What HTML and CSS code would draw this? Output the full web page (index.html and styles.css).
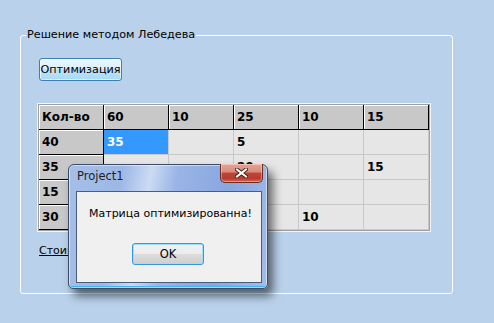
FILE: index.html
```html
<!DOCTYPE html>
<html lang="ru">
<head>
  <meta charset="UTF-8">
  <meta name="viewport" content="width=device-width, initial-scale=1.0">
  <title>Project1</title>
  <link rel="stylesheet" href="styles.css">
</head>
<body>
  <fieldset class="group">
    <legend>Решение методом Лебедева</legend>
    <div class="group-inner">
      <button class="btn-optimize">Оптимизация</button>

      <div class="grid">
        <div class="cell fixed">Кол-во</div>
        <div class="cell fixed">60</div>
        <div class="cell fixed">10</div>
        <div class="cell fixed">25</div>
        <div class="cell fixed">10</div>
        <div class="cell fixed">15</div>

        <div class="cell fixed">40</div>
        <div class="cell selected">35</div>
        <div class="cell"></div>
        <div class="cell">5</div>
        <div class="cell"></div>
        <div class="cell"></div>

        <div class="cell fixed">35</div>
        <div class="cell"></div>
        <div class="cell"></div>
        <div class="cell">20</div>
        <div class="cell"></div>
        <div class="cell">15</div>

        <div class="cell fixed">15</div>
        <div class="cell"></div>
        <div class="cell"></div>
        <div class="cell"></div>
        <div class="cell"></div>
        <div class="cell"></div>

        <div class="cell fixed">30</div>
        <div class="cell"></div>
        <div class="cell"></div>
        <div class="cell"></div>
        <div class="cell">10</div>
        <div class="cell"></div>
      </div>

      <div class="cost">Стоимость: 485</div>
    </div>
  </fieldset>

  <!-- message box over the form -->
  <div class="dialog">
    <div class="dialog-title">Project1</div>
    <button class="dialog-close">
      <svg width="13" height="10" viewBox="0 0 13 10">
        <path d="M2 1.5 L11 8.5 M11 1.5 L2 8.5" stroke="#4a1f18" stroke-width="4" stroke-linecap="square"/>
        <path d="M2 1.5 L11 8.5 M11 1.5 L2 8.5" stroke="#fff" stroke-width="2" stroke-linecap="square"/>
      </svg>
    </button>
    <div class="dialog-body">
      <p>Матрица оптимизированна!</p>
      <button class="btn-ok">OK</button>
    </div>
  </div>
</body>
</html>
```

FILE: styles.css
```css
* {
  box-sizing: border-box;
}

body {
  margin: 0;
  padding: 28px 0 0 20px;
  height: 323px;
  overflow: hidden;
  background: #b9d1ea;
  font-family: "DejaVu Sans", Tahoma, sans-serif;
  font-size: 11px;
  color: #000;
}

.group {
  width: 433px;
  height: 266px;
  margin: 0;
  padding: 0;
  border: 1px solid #fff;
  border-radius: 3px;
}

.group legend {
  margin-left: 5px;
  padding: 0 1px;
  line-height: 14px;
  font-size: 11.2px;
}

.group-inner {
  padding: 16px 0 0 18px;
}

.btn-optimize {
  display: block;
  width: 83px;
  height: 23px;
  padding: 0;
  font-family: inherit;
  font-size: 11.2px;
  color: #000;
  border: 1px solid #3c7fb1;
  border-radius: 3px;
  background: linear-gradient(#eaf6fd 0%, #d9f0fc 50%, #bee6fd 50%, #a7d9f5 100%);
  box-shadow: inset 0 0 0 1px rgba(255, 255, 255, 0.6);
}

.grid {
  display: grid;
  grid-template-columns: repeat(6, 65px);
  grid-auto-rows: 25px;
  width: fit-content;
  margin: 23px 0 0 -1px;
  border: 1px solid #a0a0a0;
  box-shadow: 0 0 0 1px #f4f4f4;
  background: #e6e6e6;
}

.cell {
  display: flex;
  align-items: center;
  padding-left: 3px;
  font-weight: bold;
  font-size: 12px;
  background: #e6e6e6;
  border-right: 1px solid #c8c8c8;
  border-bottom: 1px solid #c8c8c8;
}

.cell.fixed {
  background: #c8c8c8;
  border-right-color: #000;
  border-bottom-color: #000;
  box-shadow: inset 1px 1px 0 #fff;
}

.cell.selected {
  background: #3399ff;
  color: #fff;
}

.cost {
  margin-top: 13px;
  line-height: 14px;
  text-decoration: underline;
}

.dialog {
  position: absolute;
  left: 68px;
  top: 164px;
  width: 200px;
  height: 125px;
  padding: 0 5px 5px 7px;
  border: 1px solid #3e4d66;
  border-radius: 6px 6px 5px 5px;
  background: linear-gradient(100deg, #a6bfe9 0%, #9db8e6 25%, #cbdbf4 38%, #9ab5e5 50%, #88a7df 75%, #a3bde9 100%);
  box-shadow: 5px 7px 10px rgba(0, 0, 0, 0.55), inset 0 0 0 1px rgba(255, 255, 255, 0.5), inset 0 -2px 0 #44b4f0;
}

.dialog-title {
  height: 26px;
  padding: 4px 0 0 1px;
  line-height: 14px;
  font-size: 11.5px;
  color: #1e1e1e;
}

.dialog-close {
  position: absolute;
  top: -1px;
  right: 4px;
  width: 43px;
  height: 19px;
  padding: 0;
  display: flex;
  align-items: center;
  justify-content: center;
  border: 1px solid #6b2b21;
  border-top: none;
  border-radius: 0 0 5px 5px;
  background: linear-gradient(#e8a493 0%, #d88a7b 45%, #c0463a 50%, #b83a2e 80%, #d06a55 100%);
  box-shadow: inset 0 0 0 1px rgba(255, 255, 255, 0.35);
}

.dialog-body {
  width: 186px;
  height: 92px;
  padding: 15px 0 0 12px;
  border: 1px solid #4b5d78;
  background: #f0f0f0;
}

.dialog-body p {
  margin: 0;
  line-height: 14px;
  white-space: nowrap;
}

.btn-ok {
  display: block;
  width: 72px;
  height: 22px;
  margin: 22px 0 0 43px;
  padding: 0;
  font-family: inherit;
  font-size: 11.5px;
  color: #000;
  border: 1px solid #3399dd;
  border-radius: 3px;
  background: linear-gradient(#f2f2f2 0%, #ebebeb 50%, #dddddd 50%, #cfcfcf 100%);
  box-shadow: inset 0 0 0 1px #9ae0fb;
}
```
